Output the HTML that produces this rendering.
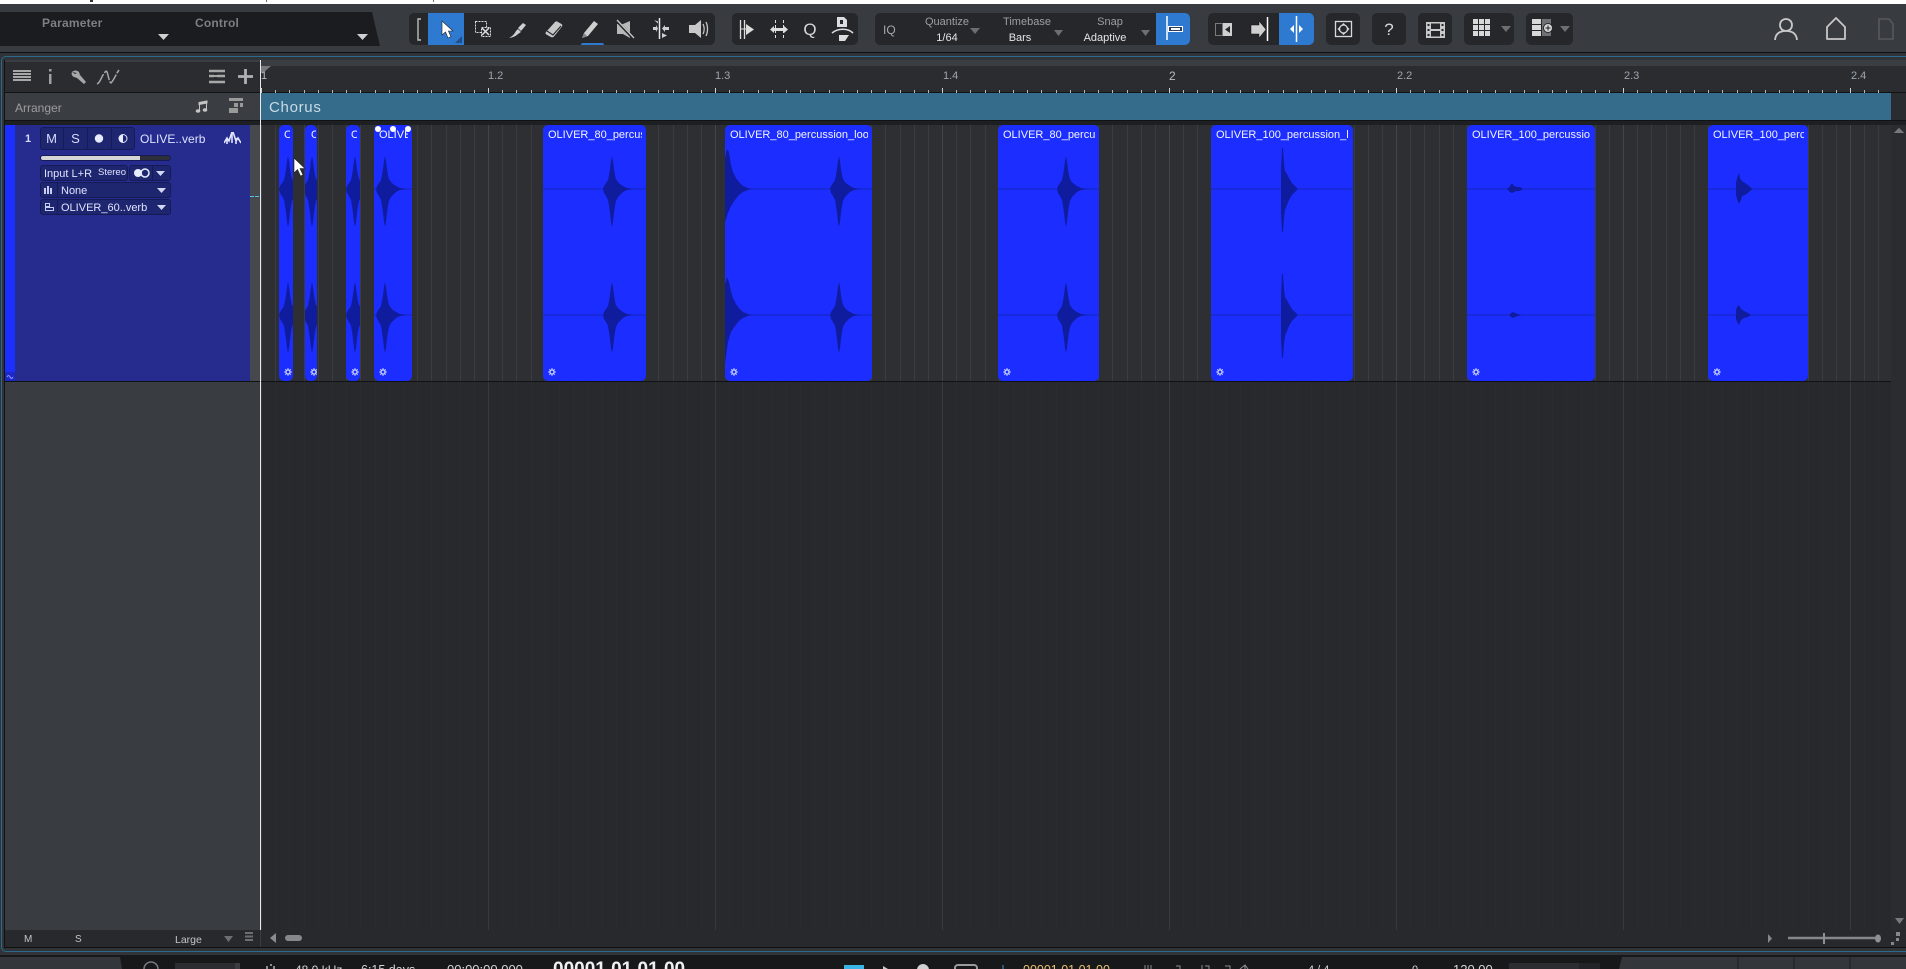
<!DOCTYPE html>
<html lang="en"><head><meta charset="utf-8"><title>Arrangement</title>
<style>
html,body{margin:0;padding:0;width:1906px;height:969px;overflow:hidden;background:#383b40}
body{position:relative;font-family:"Liberation Sans",sans-serif;font-size:11px;color:#ddd}
.a{position:absolute}
.t{position:absolute;white-space:nowrap;line-height:14px;height:14px}
.g{position:absolute;top:13px;height:32px;background:#25272b;border-radius:5px}
.b{position:absolute;top:13px;height:32px;background:#2f7ad1}
svg{position:absolute;overflow:hidden}
.c{position:absolute;top:125px;height:256px;background:#1c2eff;border-radius:5px;overflow:hidden}
.c svg{left:0;top:0}
.c span{position:absolute;left:5px;top:2px;height:16px;line-height:16px;color:#f2f4ff;font-size:11px;white-space:nowrap;overflow:hidden}
.box{position:absolute;background:#1f2670;border:1px solid #161b58;border-radius:3px;box-sizing:border-box}
</style></head><body>

<!-- top white strip -->
<div class="a" style="left:0;top:0;width:1906px;height:4px;background:#fff"></div>
<div class="a" style="left:90px;top:0;width:3px;height:2px;background:#333"></div>
<div class="a" style="left:266px;top:0;width:1px;height:2px;background:#777"></div>
<div class="a" style="left:433px;top:0;width:1px;height:2px;background:#777"></div>

<!-- parameter panel -->
<svg style="left:0;top:12px" width="385" height="35"><path d="M0 0H372L380 34H0Z" fill="#1a1c20"/><path d="M158 22h11l-5.500 6zM357 22h11l-5.500 6z" fill="#cfcfcf"/></svg>
<div class="t" style="left:42px;top:16px;font-size:12px;letter-spacing:.2px;font-weight:bold;color:#7d7f83">Parameter</div>
<div class="t" style="left:195px;top:16px;font-size:12px;letter-spacing:.2px;font-weight:bold;color:#7d7f83">Control</div>

<!-- toolbar groups -->
<div class="g" style="left:409px;width:306px"></div>
<div class="b" style="left:428px;width:36px"></div>
<div class="a" style="left:581px;top:43px;width:23px;height:2px;background:#2f7ad1;border-radius:2px 2px 0 0"></div>
<div class="g" style="left:732px;width:126px"></div>
<div class="g" style="left:875px;width:315px"></div>
<div class="b" style="left:1156px;width:34px;border-radius:0 5px 5px 0"></div>
<div class="g" style="left:1208px;width:106px"></div>
<div class="b" style="left:1279px;width:35px;border-radius:0 5px 5px 0"></div>
<div class="g" style="left:1326px;width:34px"></div>
<div class="g" style="left:1372px;width:34px"></div>
<div class="g" style="left:1418px;width:34px"></div>
<div class="g" style="left:1464px;width:50px"></div>
<div class="g" style="left:1526px;width:47px"></div>

<!-- toolbar icons -->
<svg style="left:400px;top:8px" width="1500" height="42" viewBox="400 8 1500 42">
 <g fill="none" stroke="#bdbdbd" stroke-width="1.400"><path d="M421 19h-3v21h3"/></g>
 <path d="M442 21l0 14 3.500-3 2.500 6 3-1.300-2.600-5.700h4.500z" fill="#fff" stroke="#222" stroke-width=".6"/>
 <path d="M462 36v7h-7z" fill="#1f4f8c"/>
 <!-- range -->
 <rect x="475.500" y="21.500" width="11" height="11" fill="none" stroke="#ddd" stroke-dasharray="2 1"/>
 <rect x="481.500" y="27.500" width="9" height="9" fill="#2a2c30" stroke="#ddd" stroke-dasharray="2 1"/>
 <path d="M482 28l7 7M489 28l-7 7" stroke="#ddd" stroke-width="1.500"/>
 <!-- knife -->
 <path d="M509 38c2-1 5-3 7-7l2-2 3 3-3 2c-2 2-5 3.500-9 4z" fill="#cfcfcf"/><path d="M518 28l5-5 3 2-5 6z" fill="#cfcfcf"/>
 <!-- eraser -->
 <path d="M546 32l9-10c1-.8 2-.8 3 0l3.500 2c1 .7 1 1.800.4 2.600l-8 10c-.6.800-2 .8-3 .4l-4.500-2.500c-1-.6-1.200-1.500-.4-2.500z" fill="#c8c8c8"/>
 <path d="M547 31l6 4 8-9" fill="none" stroke="#25272b" stroke-width="1.200"/>
 <!-- pencil -->
 <path d="M582 38l2-5 10-12 4 3-10 12z" fill="#cfcfcf"/><path d="M582 38l2-5 3 3z" fill="#888"/>
 <!-- mute -->
 <path d="M617 24h6l7-3v17l-7-4h-6z" fill="#b8b8b8"/><path d="M617 21l17 18" stroke="#25272b" stroke-width="3"/><path d="M617 20l17 18" stroke="#c8c8c8" stroke-width="1.300"/>
 <!-- split -->
 <path d="M659.500 18v21" stroke="#e8e8e8" stroke-width="1.500"/><path d="M654 20l4 1.500v2zM662 33l5 2.500-5 2.500zM653 27h3v-2l2 3.500-2 3.500v-2h-3zM669 27h-4v-2l-3 3.500 3 3.500v-2h4z" fill="#cfcfcf"/>
 <!-- speaker -->
 <path d="M689 25h6l6-5v18l-6-5h-6z" fill="#c8c8c8"/><path d="M703 24c1.500 3 1.500 7 0 10M706 22c2 4 2 10 0 14" fill="none" stroke="#c8c8c8" stroke-width="1.300"/>
 <!-- group 2 -->
 <path d="M740.500 20v19M744.500 20v19" stroke="#ddd" stroke-width="1.300"/><path d="M746 24l8 5.500-8 5.500z" fill="#ddd"/><path d="M740 29h6" stroke="#ddd"/>
 <path d="M775.500 20v19M783.500 20v19" stroke="#ddd" stroke-dasharray="3 2"/><path d="M770 29.500l4-3.500v2h10v-2l4 3.500-4 3.500v-2h-10v2z" fill="#ddd"/>
 <!-- print-like -->
 <path d="M837 17h7l3 3v7h-10z" fill="#ddd"/><path d="M840 20h3v4h-3z" fill="#25272b"/>
 <path d="M832 33c6-5 16-5 21 0" fill="none" stroke="#ddd" stroke-width="1.600"/><path d="M839 35h10l-4 6h-6z" fill="#ddd"/>
 <!-- snap toggle -->
 <path d="M1167 16v24" stroke="#fff" stroke-width="1.500"/><rect x="1168.500" y="26.500" width="14" height="5" fill="#2a3d5a" stroke="#fff"/><rect x="1171" y="28" width="9" height="2" fill="#fff"/>
 <!-- group 4 -->
 <rect x="1215.500" y="23.500" width="7" height="12" fill="none" stroke="#ccc" stroke-dasharray="1 1"/><rect x="1223" y="23" width="9" height="13" fill="#d0d0d0"/><path d="M1230 26l-5 3.500 5 3.500z" fill="#25272b"/>
 <path d="M1251 25h8v-4l7 8.500-7 8.500v-4h-8z" fill="#d0d0d0" stroke="#111" stroke-width=".5"/><path d="M1267.500 17v24" stroke="#fff" stroke-width="1.500"/>
 <path d="M1296.500 16v26" stroke="#fff" stroke-width="1.500"/><path d="M1294 25l-4 4 4 4zM1299 25l4 4-4 4z" fill="#fff"/>
 <!-- fit -->
 <rect x="1335.500" y="21.500" width="16" height="15" fill="none" stroke="#d8d8d8" stroke-width="1.300"/><circle cx="1343.500" cy="29" r="4" fill="none" stroke="#d8d8d8" stroke-width="1.300"/><path d="M1343.500 23l2.500 2.500h-5zM1343.500 35l2.500-2.500h-5zM1337.500 29l2.500-2.500v5zM1349.500 29l-2.500-2.500v5z" fill="#d8d8d8"/>
 <!-- film -->
 <rect x="1426" y="22" width="19" height="16" fill="#c8c8c8"/><rect x="1431" y="23.500" width="9" height="5.500" fill="#25272b"/><rect x="1431" y="31" width="9" height="5.500" fill="#25272b"/><g fill="#25272b"><rect x="1427.500" y="24" width="2" height="2"/><rect x="1427.500" y="29" width="2" height="2"/><rect x="1427.500" y="34" width="2" height="2"/><rect x="1441.500" y="24" width="2" height="2"/><rect x="1441.500" y="29" width="2" height="2"/><rect x="1441.500" y="34" width="2" height="2"/></g>
 <!-- grids -->
 <g fill="#d8d8d8"><rect x="1473" y="19" width="5" height="5"/><rect x="1479" y="19" width="5" height="5"/><rect x="1485" y="19" width="5" height="5"/><rect x="1473" y="25" width="5" height="5"/><rect x="1479" y="25" width="5" height="5"/><rect x="1485" y="25" width="5" height="5"/><rect x="1473" y="31" width="5" height="5"/><rect x="1479" y="31" width="5" height="5"/><rect x="1485" y="31" width="5" height="5"/></g>
 <g><rect x="1532" y="19" width="9" height="5" fill="#d8d8d8"/><rect x="1532" y="25" width="9" height="5" fill="#d8d8d8"/><rect x="1532" y="31" width="9" height="5" fill="#d8d8d8"/><rect x="1542" y="19" width="9" height="17" fill="#6e7073"/><circle cx="1548" cy="28" r="4.500" fill="#d8d8d8" stroke="#25272b"/><path d="M1545.500 28h5M1548 25.500v5" stroke="#222" stroke-width="1"/></g>
 <g fill="#6c6e71"><path d="M970 28h10l-5 6z"/><path d="M1054 30h9l-4.500 6z"/><path d="M1141 30h9l-4.500 6z"/><path d="M1501 26h10l-5 6z"/><path d="M1560 26h10l-5 6z"/></g>
 <path d="M1775 40c.5-6 4-9 11-9s10.500 3 11 9M1786 19c3.500 0 6 2.500 6 6s-2.500 6-6 6-6-2.500-6-6 2.500-6 6-6z" fill="none" stroke="#c8c8c8" stroke-width="1.800"/>
 <path d="M1827 39V27l9-9 9 9v12z" fill="none" stroke="#c8c8c8" stroke-width="1.800" stroke-linejoin="round"/>
 <path d="M1879 19h10l4 5v15h-14z" fill="none" stroke="#55585c" stroke-width="1.600"/>
</svg>
<div class="t" style="left:883px;top:23px;font-size:12px;color:#a8a8a8">IQ</div>
<div class="t" style="left:924px;top:15px;width:46px;text-align:center;color:#9d9fa2">Quantize</div>
<div class="t" style="left:930px;top:31px;width:34px;text-align:center;color:#e4e4e4">1/64</div>
<div class="t" style="left:1002px;top:15px;width:50px;text-align:center;color:#9d9fa2">Timebase</div>
<div class="t" style="left:1000px;top:31px;width:40px;text-align:center;color:#e4e4e4">Bars</div>
<div class="t" style="left:1090px;top:15px;width:40px;text-align:center;color:#9d9fa2">Snap</div>
<div class="t" style="left:1078px;top:31px;width:54px;text-align:center;color:#e4e4e4">Adaptive</div>
<div class="t" style="left:802px;top:20px;width:16px;text-align:center;font-size:17px;height:20px;line-height:20px;color:#d8d8d8">Q</div>
<div class="t" style="left:1380px;top:20px;width:18px;text-align:center;font-size:17px;height:20px;line-height:20px;color:#d8d8d8">?</div>

<!-- frame lines -->
<div class="a" style="left:0;top:52px;width:1906px;height:1px;background:#0f1012"></div>
<div class="a" style="left:0;top:53px;width:1906px;height:903px;background:#303338"></div>
<div class="a" style="left:1px;top:56px;width:1905px;height:896px;border-top:1px solid #2b6a8c;border-left:1px solid #2b6a8c;border-bottom:1px solid #2b6a8c;border-radius:5px 0 0 5px;box-sizing:border-box"></div>
<div class="a" style="left:4px;top:60px;width:1902px;height:888px;background:#111214"></div>

<!-- header left -->
<div class="a" style="left:5px;top:60px;width:255px;height:32px;background:#2a2c30"></div>
<div class="a" style="left:5px;top:60px;width:255px;height:2px;background:#3a3d42"></div>
<svg style="left:5px;top:60px" width="255" height="32" viewBox="5 60 255 32">
 <path d="M13 71h18M13 74h18M13 77h18M13 80h18" stroke="#a8a8a8" stroke-width="2"/>
 <rect x="49" y="69" width="2.500" height="2.500" fill="#a0a0a0"/><rect x="49" y="74" width="2.500" height="10" fill="#a0a0a0"/>
 <path d="M72 72c2-2 5-2 7 0l1 3 6 7-2 2-7-6-3-1c-2-1-3-3-2-5l3 2 2-1z" fill="#a8a8a8"/>
 <path d="M97 84c3-1 4-6 6-9s3-5 4-3 2 10 4 11c3-3 5-9 8-13" fill="none" stroke="#a8a8a8" stroke-width="1.500" stroke-dasharray="12 1.500"/>
 <path d="M209 71h16M209 76h5M217 76h8M209 82h16" stroke="#a8a8a8" stroke-width="2.500"/><path d="M209 76h16" stroke="#a8a8a8" stroke-width="2"/>
 <path d="M245.500 69v15M238 76.500h15" stroke="#b0b0b0" stroke-width="2.800"/>
</svg>

<!-- ruler -->
<div class="a" style="left:261px;top:60px;width:1645px;height:6px;background:#3a3d42"></div>
<div class="a" style="left:261px;top:66px;width:1645px;height:26px;background:#2a2c30"></div>
<svg style="left:261px;top:60px" width="1645" height="33">
 <defs><pattern id="tk" x="0" y="0" width="227" height="33" patternUnits="userSpaceOnUse">
  <path d="M14.500 30v3M28.500 30v3M43.500 30v3M57.500 30v3M71.500 30v3M85.500 30v3M99.500 30v3M114.500 30v3M128.500 30v3M142.500 30v3M156.500 30v3M170.500 30v3M185.500 30v3M199.500 30v3M213.500 30v3" stroke="#b8b8b8"/>
  <path d="M.5 28v5" stroke="#d0d0d0"/></pattern></defs>
 <rect width="1632" height="33" fill="url(#tk)"/>
 <path d="M0 6h10l-8 7H0z" fill="#77797c"/>
</svg>
<div class="t" style="left:261px;top:69px;color:#b9bcc0">1</div>
<div class="t" style="left:488px;top:69px;color:#9fa6ae;font-size:11px">1.2</div>
<div class="t" style="left:715px;top:69px;color:#9fa6ae">1.3</div>
<div class="t" style="left:943px;top:69px;color:#9fa6ae">1.4</div>
<div class="t" style="left:1169px;top:69px;color:#b9bcc0;font-size:12px">2</div>
<div class="t" style="left:1397px;top:69px;color:#9fa6ae">2.2</div>
<div class="t" style="left:1624px;top:69px;color:#9fa6ae">2.3</div>
<div class="t" style="left:1851px;top:69px;color:#9fa6ae">2.4</div>

<!-- arranger row -->
<div class="a" style="left:5px;top:93px;width:255px;height:27px;background:#3a3d42"></div>
<div class="t" style="left:15px;top:101px;font-size:12px;color:#9b9da0">Arranger</div>
<svg style="left:190px;top:95px" width="60" height="22" viewBox="190 95 60 22">
 <path d="M199.500 103v8M206.500 102v8M199 102.500l8-1.500v2l-8 1.500z" stroke="#c4c4c4" fill="#c4c4c4"/><ellipse cx="198" cy="111" rx="2.300" ry="1.800" fill="#c4c4c4"/><ellipse cx="205" cy="110" rx="2.300" ry="1.800" fill="#c4c4c4"/>
 <g fill="#9a9a9a"><rect x="229" y="98" width="14" height="3"/><rect x="234" y="103" width="4" height="4"/><rect x="240" y="103" width="3" height="4"/><rect x="229" y="108" width="9" height="5"/></g>
</svg>
<div class="a" style="left:261px;top:93px;width:1630px;height:27px;background:#356c8b"></div>
<div class="t" style="left:269px;top:99px;height:18px;line-height:18px;font-size:15px;letter-spacing:.7px;color:#c9dce6">Chorus</div>
<div class="a" style="left:1891px;top:93px;width:15px;height:27px;background:#2a2c30"></div>

<!-- arrange bg -->
<div class="a" style="left:261px;top:121px;width:1645px;height:4px;background:#1e1f22"></div>
<div class="a" style="left:5px;top:121px;width:255px;height:4px;background:#1e1f22"></div>
<svg style="left:261px;top:125px" width="1630" height="805">
 <defs>
  <pattern id="gt" x="0" y="0" width="227" height="256" patternUnits="userSpaceOnUse"><rect width="227" height="256" fill="#2d2f33"/>
   <path d="M14.500 0v256M28.500 0v256M43.500 0v256M57.500 0v256M71.500 0v256M85.500 0v256M99.500 0v256M114.500 0v256M128.500 0v256M142.500 0v256M156.500 0v256M170.500 0v256M185.500 0v256M199.500 0v256M213.500 0v256" stroke="#3a3c40"/><path d="M.5 0v256" stroke="#434549"/></pattern>
  <pattern id="gb" x="0" y="0" width="227" height="549" patternUnits="userSpaceOnUse"><rect width="227" height="549" fill="#27292d"/>
   <path d="M14.500 0v549M28.500 0v549M43.500 0v549M57.500 0v549M71.500 0v549M85.500 0v549M99.500 0v549M114.500 0v549M128.500 0v549M142.500 0v549M156.500 0v549M170.500 0v549M185.500 0v549M199.500 0v549M213.500 0v549" stroke="#2a2c30"/><path d="M.5 0v549" stroke="#37393d"/></pattern>
 </defs>
 <rect width="1630" height="256" fill="url(#gt)"/>
 <rect y="256" width="1630" height="1" fill="#111214"/>
 <rect y="257" width="1630" height="548" fill="url(#gb)"/>
</svg>
<!-- right gutter -->
<div class="a" style="left:1891px;top:125px;width:15px;height:805px;background:#2a2c30"></div>
<svg style="left:1891px;top:125px" width="15" height="805"><path d="M4 7.500l4-4 4 4h-8z" stroke="#77797c" fill="#77797c"/><path d="M4 793h9l-4.500 6z" fill="#77797c"/></svg>

<!-- track panel -->
<div class="a" style="left:5px;top:125px;width:245px;height:256px;background:#252c8e"></div>
<div class="a" style="left:5px;top:125px;width:10px;height:256px;background:#1b30ff"></div>
<div class="a" style="left:250px;top:125px;width:10px;height:256px;background:#45484c"></div>
<div class="a" style="left:250px;top:196px;width:4px;height:1px;background:#55c0e8"></div>
<div class="a" style="left:255px;top:196px;width:4px;height:1px;background:#55c0e8"></div>
<div class="a" style="left:5px;top:372px;width:10px;height:9px;background:#1d28c8"></div>
<svg style="left:5px;top:372px" width="10" height="9"><path d="M2 5c1-2 2-2 3 0s2 2 3 0" fill="none" stroke="#8fa0ff"/></svg>
<div class="t" style="left:25px;top:132px;font-weight:bold;color:#d8dcff">1</div>
<div class="box" style="left:40px;top:127px;width:95px;height:23px"></div>
<div class="a" style="left:63px;top:128px;width:1px;height:21px;background:#161b58"></div>
<div class="a" style="left:87px;top:128px;width:1px;height:21px;background:#161b58"></div>
<div class="a" style="left:111px;top:128px;width:1px;height:21px;background:#161b58"></div>
<div class="t" style="left:40px;top:132px;width:23px;text-align:center;font-size:13px;color:#d8dcff">M</div>
<div class="t" style="left:64px;top:132px;width:23px;text-align:center;font-size:13px;color:#d8dcff">S</div>
<svg style="left:88px;top:128px" width="46" height="21"><circle cx="11" cy="10.500" r="4.200" fill="#e8ecff"/><circle cx="35" cy="10.500" r="4" fill="none" stroke="#e0e4ff"/><path d="M35 6.500a4 4 0 0 0 0 8z" fill="#e8ecff"/></svg>
<div class="t" style="left:140px;top:132px;color:#e0e4ff;font-size:12px">OLIVE..verb</div>
<svg style="left:224px;top:132px" width="17" height="13"><path d="M0 11l3-5 2 3 3-9 1 0 3 9 2-3 3 5M3 6v6M8 0v11M12 6v6" fill="none" stroke="#e0e4ff" stroke-width="1.600"/></svg>
<div class="a" style="left:40px;top:155px;width:131px;height:6px;background:#2d2f3a;border:1px solid #161b58;border-radius:3px;box-sizing:border-box"></div>
<div class="a" style="left:41px;top:156px;width:99px;height:4px;background:#d6d6d6;border-radius:2px 0 0 2px"></div>
<div class="box" style="left:40px;top:165px;width:88px;height:16px"></div>
<div class="box" style="left:129px;top:165px;width:42px;height:16px"></div>
<div class="a" style="left:152px;top:166px;width:1px;height:14px;background:#161b58"></div>
<div class="t" style="left:44px;top:167px;color:#dfe3ff">Input L+R</div>
<div class="t" style="left:98px;top:166px;font-size:9.500px;color:#dfe3ff">Stereo</div>
<svg style="left:132px;top:166px" width="40" height="14"><circle cx="6" cy="7" r="4" fill="#e8ecff"/><circle cx="13" cy="7" r="4" fill="none" stroke="#e8ecff" stroke-width="1.500"/><path d="M24 5h9l-4.500 5z" fill="#d4d8f5"/></svg>
<div class="box" style="left:40px;top:182px;width:131px;height:16px"></div>
<div class="a" style="left:57px;top:183px;width:1px;height:14px;background:#161b58"></div>
<div class="t" style="left:61px;top:184px;color:#dfe3ff">None</div>
<svg style="left:41px;top:183px" width="130" height="14"><path d="M4 5v6M7 3v8M10 5v6" stroke="#c8ccf0" stroke-width="2"/><path d="M116 5h9l-4.500 5z" fill="#d4d8f5"/></svg>
<div class="box" style="left:40px;top:199px;width:131px;height:16px"></div>
<div class="a" style="left:57px;top:200px;width:1px;height:14px;background:#161b58"></div>
<div class="t" style="left:61px;top:201px;color:#dfe3ff">OLIVER_60..verb</div>
<svg style="left:41px;top:200px" width="130" height="14"><path d="M4.500 3.500h4v3h-4zM4.500 7.500h8v3h-8z" fill="none" stroke="#c8ccf0"/><path d="M116 5h9l-4.500 5z" fill="#d4d8f5"/></svg>

<!-- panel below track -->
<div class="a" style="left:5px;top:381px;width:255px;height:1px;background:#111214"></div>
<div class="a" style="left:5px;top:382px;width:255px;height:548px;background:#393c41"></div>
<div class="a" style="left:5px;top:930px;width:255px;height:17px;background:#27292d"></div>
<div class="t" style="left:24px;top:933px;font-size:10px;color:#c4c4c4">M</div>
<div class="t" style="left:75px;top:933px;font-size:10px;color:#c4c4c4">S</div>
<div class="t" style="left:175px;top:933px;font-size:10.500px;color:#c4c4c4">Large</div>
<svg style="left:220px;top:930px" width="40" height="17"><path d="M4 6h9l-4.500 6z" fill="#6c6e71"/><path d="M25 3h8M25 6.500h8M25 10h8" stroke="#6c6e71" stroke-width="2"/></svg>
<!-- footer bar -->
<div class="a" style="left:261px;top:930px;width:1645px;height:17px;background:#27292d"></div>
<div class="a" style="left:260px;top:60px;width:1px;height:887px;background:#e8e8e8"></div>
<div class="a" style="left:260px;top:930px;width:1px;height:17px;background:#3a3c40"></div>
<svg style="left:261px;top:930px" width="1645" height="17">
 <path d="M9 8l6-5v10z" fill="#8a8c8f"/><rect x="24" y="5" width="17" height="6" rx="3" fill="#85878a"/>
 <path d="M1507 4l4 4.500-4 4.500z" fill="#85878a"/>
 <path d="M1527 8h91" stroke="#85878a" stroke-width="2.500"/><rect x="1562" y="3" width="2" height="11" fill="#8e9093"/><ellipse cx="1617" cy="8.500" rx="3" ry="4" fill="#8e9093"/>
 <g fill="#85878a"><rect x="1635" y="2" width="4" height="4"/><rect x="1635" y="8" width="3" height="3"/><rect x="1630" y="12" width="3" height="3"/></g>
</svg>

<!-- clips -->
<svg width="0" height="0" style="left:0;top:0"><defs>
 <path id="w" d="M-9 0L-8-3-6-6-4-9-3-14-2-20-1-28 0-33 1-28 2-20 3-14 4-10 6-7 8-5 11-3 15-1 22 0 15 1 11 3 8 6 6 8 4 12 3 17 2 24 1 33 0 38-1 33-2 24-3 17-4 11-6 7-8 4Z"/>
 <path id="n" d="M-1 0L-1-20 0-41 1-41 2-26 3-18 5-15 7-11 10-6 13-3 16 0 13 3 10 6 7 11 5 16 3 21 2 29 1 43 0 43-1 24Z"/>
 <g id="gr" fill="none" stroke="#dfe6ff" stroke-width="1.100"><circle r="2"/><path d="M0-3.700V-2.500M0 3.700V2.500M-3.700 0H-2.500M3.700 0H2.500M-2.600-2.600L-1.800-1.800M2.600 2.600L1.800 1.800M-2.600 2.600L-1.800 1.800M2.600-2.600L1.800-1.800"/></g>
</defs></svg>
<div class="c" style="left:279px;width:14px"><svg width="14" height="256" viewBox="279 125 14 256" fill="#101c9e"><use href="#w" x="288" y="189"/><use href="#w" x="288" y="315"/><use href="#gr" x="288" y="372"/></svg><span style="width:6px">OLIVER</span></div>
<div class="c" style="left:305px;width:12px"><svg width="12" height="256" viewBox="305 125 12 256" fill="#101c9e"><use href="#w" x="312" y="189"/><use href="#w" x="312" y="315"/><use href="#gr" x="314" y="372"/></svg><span style="width:5px;left:6px">OLIVER</span></div>
<div class="c" style="left:346px;width:14px"><svg width="14" height="256" viewBox="346 125 14 256" fill="#101c9e"><use href="#w" x="355" y="189"/><use href="#w" x="355" y="315"/><use href="#gr" x="355" y="372"/></svg><span style="width:6px">OLIVER</span></div>
<div class="c" style="left:374px;width:38px"><svg width="38" height="256" viewBox="374 125 38 256" fill="#101c9e"><path d="M374 189h38M374 315h38" stroke="#1425b8"/><use href="#w" x="385" y="189"/><use href="#w" x="385" y="315"/><use href="#gr" x="383" y="372"/></svg><span style="width:29px">OLIVER</span></div>
<div class="c" style="left:543px;width:103px"><svg width="103" height="256" viewBox="543 125 103 256" fill="#101c9e"><path d="M543 189h103M543 315h103" stroke="#1425b8"/><use href="#w" x="612" y="189"/><use href="#w" x="612" y="315"/><use href="#gr" x="552" y="372"/></svg><span style="width:94px">OLIVER_80_percussion_loop</span></div>
<div class="c" style="left:725px;width:147px"><svg width="147" height="256" viewBox="725 125 147 256" fill="#101c9e"><path d="M725 189h147M725 315h147" stroke="#1425b8"/>
 <path d="M725 158L727 149 729 152 731 165 733 172 736 178 739 182 743 186 748 188 752 189 748 190 743 192 739 195 735 200 731 206 728 213 725 222Z"/>
 <path d="M725 284L727 277 729 282 731 291 733 298 736 304 739 308 743 312 748 314 752 315 748 316 743 318 739 321 735 326 731 332 728 342 725 363Z"/>
 <use href="#w" x="839" y="189"/><use href="#w" x="839" y="315"/><use href="#gr" x="734" y="372"/></svg><span style="width:138px">OLIVER_80_percussion_loop</span></div>
<div class="c" style="left:998px;width:101px"><svg width="101" height="256" viewBox="998 125 101 256" fill="#101c9e"><path d="M998 189h101M998 315h101" stroke="#1425b8"/><use href="#w" x="1066" y="189"/><use href="#w" x="1066" y="315"/><use href="#gr" x="1007" y="372"/></svg><span style="width:92px">OLIVER_80_percussion_loop</span></div>
<div class="c" style="left:1211px;width:142px"><svg width="142" height="256" viewBox="1211 125 142 256" fill="#101c9e"><path d="M1211 189h142M1211 315h142" stroke="#1425b8"/><use href="#n" x="1282" y="189"/><use href="#n" x="1282" y="315"/><use href="#gr" x="1220" y="372"/></svg><span style="width:133px">OLIVER_100_percussion_loop</span></div>
<div class="c" style="left:1467px;width:128px"><svg width="128" height="256" viewBox="1467 125 128 256" fill="#101c9e"><path d="M1467 189h128M1467 315h128" stroke="#1425b8"/>
 <path d="M1507 189L1510 186 1512 183 1514 186 1517 187 1520 187 1523 189 1520 191 1517 191 1514 192 1512 193 1510 192Z"/>
 <path d="M1509 315L1511 313 1513 312 1515 313 1518 314 1522 315 1518 316 1515 317 1513 318 1511 317Z"/><use href="#gr" x="1476" y="372"/></svg><span style="width:118px">OLIVER_100_percussion_loop</span></div>
<div class="c" style="left:1708px;width:100px"><svg width="100" height="256" viewBox="1708 125 100 256" fill="#101c9e"><path d="M1708 189h100M1708 315h100" stroke="#1425b8"/>
 <path d="M1736 189L1736 183 1737 178 1739 173 1740 178 1742 181 1745 183 1748 185 1750 187 1753 189 1750 191 1748 193 1745 195 1742 196 1741 200 1739 204 1737 199 1736 195Z"/>
 <path d="M1736 315L1736 310 1737 307 1739 305 1741 309 1744 311 1748 313 1751 315 1748 317 1744 318 1741 320 1739 325 1737 322 1736 319Z"/><use href="#gr" x="1717" y="372"/></svg><span style="width:91px">OLIVER_100_percussion_loop</span></div>

<!-- handles + cursor -->
<svg style="left:370px;top:122px" width="46" height="14"><circle cx="8" cy="7" r="3" fill="#fff"/><circle cx="23" cy="7" r="3" fill="#fff"/><circle cx="38" cy="7" r="3" fill="#fff"/></svg>
<svg style="left:292px;top:156px" width="16" height="22"><path d="M2 2v15l3.500-3.500 3 6.500 2.500-1-3-6.500h5z" fill="#fff" stroke="#222" stroke-width=".6"/></svg>

<!-- bottom blue gap -->
<div class="a" style="left:4px;top:947px;width:1902px;height:1px;background:#0e0f10"></div>

<!-- transport -->
<div class="a" style="left:0;top:955px;width:1906px;height:14px;background:#17181a"></div>
<div class="a" style="left:0;top:953px;width:1906px;height:2px;background:#303338"></div>
<svg style="left:0;top:955px" width="1906" height="14">
 <path d="M0 2H120L122 14H0Z" fill="#33363b"/>
 <path d="M1622 2H1906V14H1619Z" fill="#33363b"/><path d="M1738 2v12M1794 2v12M1850 2v12" stroke="#1d1e20"/>
 <circle cx="151" cy="14" r="7" fill="none" stroke="#77797c" stroke-width="1.500"/>
 <rect x="175" y="8" width="65" height="6" fill="#2b2d30"/><rect x="235" y="8" width="5" height="6" fill="#3a3c40"/>
 <g fill="#8a8c8f"><rect x="266" y="11" width="2" height="3"/><rect x="270" y="9" width="2" height="2"/><rect x="273" y="11" width="2" height="3"/></g>
 <rect x="844" y="10" width="20" height="4" fill="#39b4e6"/>
 <path d="M883 11l5 3h-5z" fill="#c8c8c8"/><circle cx="923" cy="15" r="6" fill="#d0d0d0"/><rect x="955" y="10" width="22" height="8" rx="3" fill="none" stroke="#9a9a9a" stroke-width="2"/>
 <path d="M1003 10v4" stroke="#4a90c8"/><path d="M1145 10v4M1148 10v4M1151 10v4M1176 11h4v3M1202 10v4M1205 11h4v3M1225 11h5v3M1245 10v4M1240 14l5-4 3 4" stroke="#8a8c8f" fill="none"/>
 <rect x="1509" y="8" width="70" height="6" fill="#2b2d30"/><rect x="1579" y="8" width="21" height="6" fill="#232427"/>
</svg>
<div class="t" style="left:295px;top:963px;font-size:12px;color:#d4d4d4">48.0 kHz</div>
<div class="t" style="left:361px;top:963px;font-size:12.500px;color:#d4d4d4">6:15 days</div>
<div class="t" style="left:447px;top:963px;font-size:13px;color:#d4d4d4">00:00:00.000</div>
<div class="t" style="left:553px;top:960px;height:20px;line-height:20px;font-size:19px;font-weight:bold;color:#f0f0f0">00001.01.01.00</div>
<div class="t" style="left:1023px;top:963px;font-size:12.500px;color:#e8c070">00001.01.01.00</div>
<div class="t" style="left:1308px;top:963px;color:#d4d4d4">4 / 4</div>
<div class="t" style="left:1412px;top:963px;color:#d4d4d4">0</div>
<div class="t" style="left:1453px;top:963px;font-size:13px;color:#d4d4d4">120.00</div>
</body></html>
